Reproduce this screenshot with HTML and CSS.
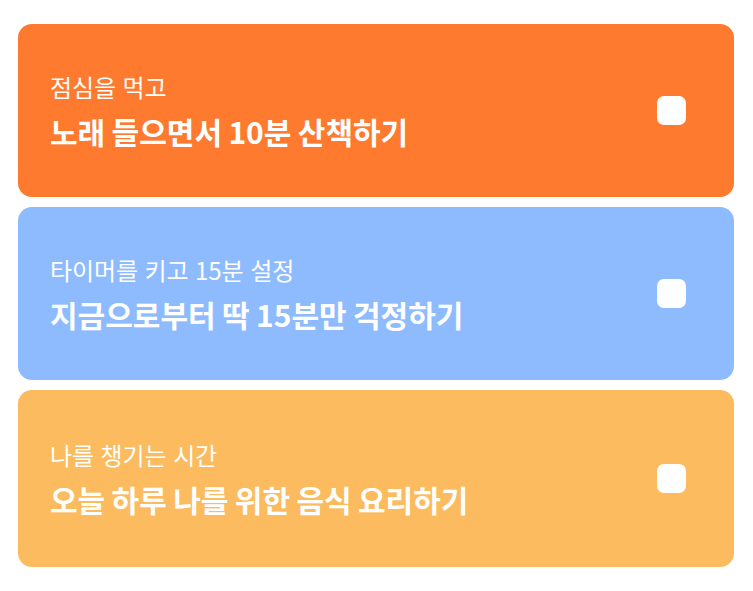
FILE: index.html
```html
<!DOCTYPE html>
<html lang="ko">
<head>
<meta charset="utf-8">
<link rel="stylesheet" href="styles.css">
</head>
<body>
<main class="list">
  <section class="card card--orange">
    <div class="text">
      <p class="sub">점심을 먹고</p>
      <h2 class="title">노래 들으면서 10분 산책하기</h2>
    </div>
    <span class="check"></span>
  </section>
  <section class="card card--blue">
    <div class="text">
      <p class="sub">타이머를 키고 15분 설정</p>
      <h2 class="title">지금으로부터 딱 15분만 걱정하기</h2>
    </div>
    <span class="check"></span>
  </section>
  <section class="card card--yellow">
    <div class="text">
      <p class="sub">나를 챙기는 시간</p>
      <h2 class="title">오늘 하루 나를 위한 음식 요리하기</h2>
    </div>
    <span class="check"></span>
  </section>
</main>
</body>
</html>
```
FILE: styles.css
```css
* { box-sizing: border-box; }
html, body { margin: 0; padding: 0; background: #fff; }
body {
  font-family: "Noto Sans CJK KR", "Noto Sans", sans-serif;
  color: #fff;
}
.list {
  display: flex;
  flex-direction: column;
  gap: 10px;
  padding: 24px 19px 0 18px;
}
.card {
  display: flex;
  align-items: center;
  justify-content: space-between;
  height: 173px;
  padding: 0 48px 0 32px;
  border-radius: 14px;
}
.card--orange { background: #fe7a2f; }
.card--blue { background: #8ebbfe; }
.card--yellow { background: #fcbb5e; height: 177px; }
.text {
  display: flex;
  flex-direction: column;
  gap: 10px;
  margin-top: 1px;
}
.sub {
  margin: 0;
  font-size: 24px;
  line-height: 30px;
  font-weight: 400;
  letter-spacing: -0.1px;
}
.title {
  margin: 0;
  font-size: 30px;
  line-height: 38px;
  font-weight: 700;
  word-spacing: -2px;
}
.check {
  width: 29px;
  height: 29px;
  border-radius: 7px;
  background: #fff;
}
```
